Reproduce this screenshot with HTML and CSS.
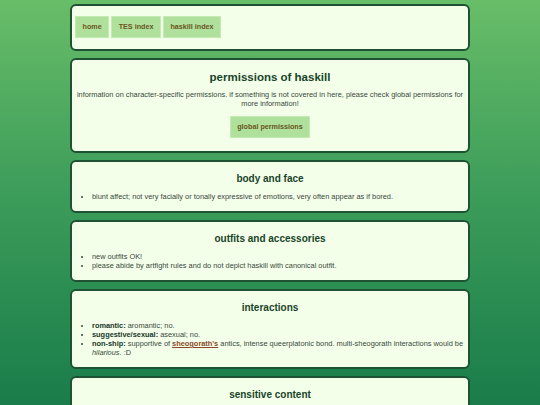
FILE: index.html
```html
<!DOCTYPE html>
<html>
<head>
<meta charset="utf-8">
<link rel="stylesheet" href="styles.css">
</head>
<body>
<div class="page">
  <div class="card nav-card">
    <nav class="nav">
      <a class="btn" href="#">home</a>
      <a class="btn" href="#">TES index</a>
      <a class="btn" href="#">haskill index</a>
    </nav>
  </div>
  <div class="card intro">
    <h1 class="title">permissions of haskill</h1>
    <p class="lead">information on character-specific permissions. if something is not covered in here, please check global permissions for more information!</p>
    <div class="center"><a class="btn btn-big" href="#">global permissions</a></div>
  </div>
  <div class="card">
    <h2 class="sec">body and face</h2>
    <ul class="list">
      <li>blunt affect; not very facially or tonally expressive of emotions, very often appear as if bored.</li>
    </ul>
  </div>
  <div class="card">
    <h2 class="sec">outfits and accessories</h2>
    <ul class="list">
      <li>new outfits OK!</li>
      <li>please abide by artfight rules and do not depict haskill with canonical outfit.</li>
    </ul>
  </div>
  <div class="card">
    <h2 class="sec">interactions</h2>
    <ul class="list">
      <li><b>romantic:</b> aromantic; no.</li>
      <li><b>suggestive/sexual:</b> asexual; no.</li>
      <li><b>non-ship:</b> supportive of <a class="link" href="#">sheogorath's</a> antics, intense queerplatonic bond. multi-sheogorath interactions would be <i>hilarious</i>. :D</li>
    </ul>
  </div>
  <div class="card">
    <h2 class="sec">sensitive content</h2>
  </div>
</div>
</body>
</html>
```
FILE: styles.css
```css
html, body {
  margin: 0;
  padding: 0;
}
body {
  background: linear-gradient(to bottom, #68bd68 0%, #3d9d5a 45%, #177a49 100%);
  min-height: 405px;
  font-family: "Liberation Sans", Arial, sans-serif;
  font-size: 7.4px;
  color: #36483c;
}
.page {
  width: 400px;
  margin: 0 auto;
  padding-top: 4px;
  display: flex;
  flex-direction: column;
  gap: 7px;
}
.card {
  background: #f4ffe9;
  border: 2px solid #1e5232;
  border-radius: 6px;
  padding: 0 3px 10px;
}
.nav-card {
  padding: 10px 3px 11px;
}
.nav {
  display: flex;
  gap: 2px;
}
.btn {
  display: inline-block;
  background: #afe19c;
  border: 1px solid #c3ebb2;
  color: #6a5520;
  font-weight: bold;
  font-size: 7.2px;
  line-height: 8px;
  padding: 6px 6.5px;
  text-decoration: none;
}
.title {
  margin: 10px 0 6px;
  text-align: center;
  font-size: 11.5px;
  line-height: 14px;
  color: #18442a;
}
.lead {
  margin: 0 0 8px;
  text-align: center;
  line-height: 9px;
}
.center {
  text-align: center;
  padding-bottom: 3px;
}
.sec {
  margin: 11px 0 7px;
  text-align: center;
  font-size: 10px;
  line-height: 12px;
  color: #18442a;
}
.list {
  margin: 0;
  padding-left: 17px;
  line-height: 9px;
}
.list b {
  color: #18362a;
}
.link {
  color: #8a4a2a;
  font-weight: bold;
}
```
